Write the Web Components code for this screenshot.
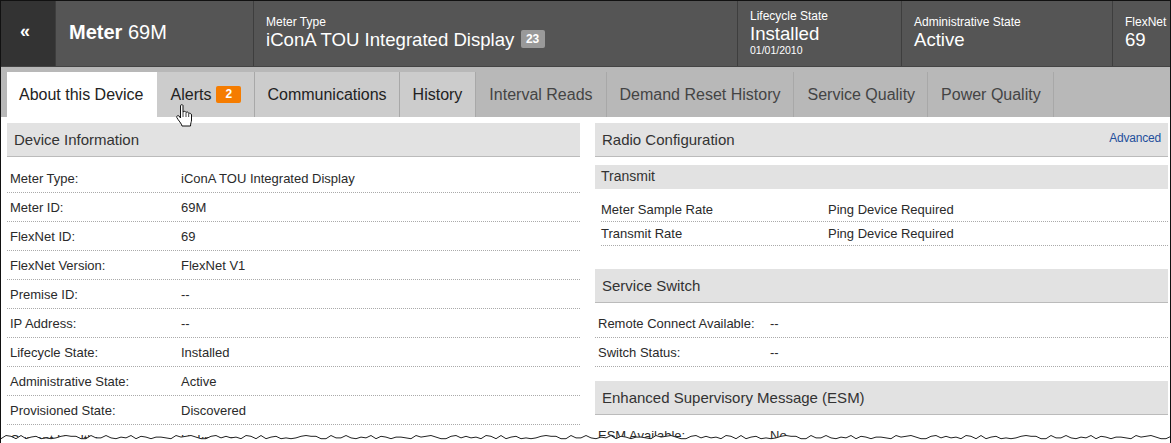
<!DOCTYPE html>
<html>
<head>
<meta charset="utf-8">
<style>
  html, body { margin: 0; padding: 0; background: #fff; overflow: hidden; }
  body { width: 1171px; height: 443px; font-family: "Liberation Sans", Arial, sans-serif; }
</style>
</head>
<body>
<device-page></device-page>
<script>
class HeaderCell extends HTMLElement {
  constructor() {
    super();
    this.attachShadow({ mode: "open" });
    this.shadowRoot.innerHTML = `<style>
        :host { display: flex; flex-direction: column; justify-content: center; box-sizing: border-box; height: 100%; padding: 0 0 1px 12px; border-left: 1px solid #3e3e3e; color: #fff; white-space: nowrap; overflow: hidden; }
        :host([date]) { padding-bottom: 3px; }
        .label { font-size: 12px; line-height: 14px; }
        .value { font-size: 18.6px; line-height: 22px; }
        .date { font-size: 10.5px; line-height: 11px; }
      </style>
      <div class="label">${this.getAttribute("label")}</div>
      <div class="value"><slot></slot></div>
      ${this.hasAttribute("date") ? `<div class="date">${this.getAttribute("date")}</div>` : ""}`;
  }
}

class TabItem extends HTMLElement {
  constructor() {
    super();
    this.attachShadow({ mode: "open" });
    this.shadowRoot.innerHTML = `<style>
        :host { display: flex; align-items: center; box-sizing: border-box; height: 45px; padding: 0 13px; font-size: 16px; background: #b8b8b8; color: #444; border-right: 1px solid #a8a8a8; white-space: nowrap; }
        :host([state="active"]) { background: #fff; color: #222; border-right: 1px solid #fff; padding: 0 12px; }
        :host([state="on"]) { background: #ccc; color: #222; }
      </style><slot></slot>`;
  }
}

class PanelHead extends HTMLElement {
  constructor() {
    super();
    this.attachShadow({ mode: "open" });
    this.shadowRoot.innerHTML = `<style>
        :host { display: flex; justify-content: space-between; box-sizing: border-box; height: 34px; padding: 0 7px; background: #e2e2e2; border-bottom: 1px solid #bbb; font-size: 15px; line-height: 34px; color: #333; }
        ::slotted(a) { font-size: 12px; line-height: 30px; letter-spacing: -0.2px; color: #1f4f9c; }
      </style><slot></slot><slot name="side"></slot>`;
  }
}

class InfoRow extends HTMLElement {
  constructor() {
    super();
    this.attachShadow({ mode: "open" });
    this.shadowRoot.innerHTML = `<style>
        :host { display: grid; grid-template-columns: var(--label-width, 171px) 1fr; box-sizing: border-box; height: var(--row-height, 29px); padding-left: var(--row-pad, 3px); border-bottom: 1px dotted #aaa; font-size: 13px; line-height: var(--row-line, 30px); color: #2a2a2a; white-space: nowrap; }
      </style><div>${this.getAttribute("label")}</div><div><slot></slot></div>`;
  }
}

class DevicePage extends HTMLElement {
  constructor() {
    super();
    this.attachShadow({ mode: "open" });
    this.shadowRoot.innerHTML = `<style>
        :host { display: block; position: relative; box-sizing: border-box; width: 1171px; height: 443px; overflow: hidden; background: #fff; border-top: 1px solid #111; border-left: 1px solid #111; border-right: 1px solid #111; font-family: "Liberation Sans", Arial, sans-serif; }
        .top { display: flex; box-sizing: border-box; height: 66px; background: #555; border-bottom: 1px solid #444; }
        .back { width: 54px; flex: none; display: flex; align-items: center; justify-content: center; background: #333; color: #fff; font-size: 18px; font-weight: bold; padding: 0 6px 4px 0; box-sizing: border-box; }
        .name { width: 198px; flex: none; padding-left: 13px; font-size: 20px; line-height: 63px; color: #fff; border-left: 1px solid #3e3e3e; box-sizing: border-box; }
        .count { display: inline-block; width: 24px; margin-left: 1px; text-align: center; background: #999; border-radius: 2px; color: #fff; font-size: 12px; font-weight: bold; line-height: 18px; vertical-align: 3px; }
        .tabs { display: flex; box-sizing: border-box; height: 50px; padding: 5px 0 0 6px; background: #b8b8b8; }
        .alert { display: inline-block; margin-left: 5px; width: 25px; text-align: center; background: #f57c00; border-radius: 2px; color: #fff; font-size: 12px; font-weight: bold; line-height: 17px; }
        .cols { display: grid; grid-template-columns: 573px 573px; gap: 15px; padding: 6px 0 0 6px; }
        .sub { height: 24px; margin-top: 8px; padding-left: 6px; background: #e2e2e2; font-size: 14px; line-height: 23px; color: #333; }
        .rates { --label-width: 227px; --row-height: 24px; --row-line: 23px; --row-pad: 0px; margin: 9px 0 0 6px; display: block; }
        .sw { --label-width: 172px; }
        .hand { position: absolute; left: 175px; top: 103px; }
        .tear { position: absolute; left: 0; top: 431px; }
      </style>
      <div class="top">
        <div class="back">«</div>
        <div class="name"><b>Meter</b> 69M</div>
        <header-cell style="width:484px" label="Meter Type">iConA TOU Integrated Display <span class="count">23</span></header-cell>
        <header-cell style="width:164px" label="Lifecycle State" date="01/01/2010">Installed</header-cell>
        <header-cell style="width:211px" label="Administrative State">Active</header-cell>
        <header-cell style="flex:1" label="FlexNet">69</header-cell>
      </div>
      <div class="tabs">
        <tab-item state="active">About this Device</tab-item>
        <tab-item state="on" style="padding-left:14px">Alerts<span class="alert">2</span></tab-item>
        <tab-item state="on" style="padding:0 12px">Communications</tab-item>
        <tab-item state="on">History</tab-item>
        <tab-item>Interval Reads</tab-item>
        <tab-item>Demand Reset History</tab-item>
        <tab-item style="padding-right:12px">Service Quality</tab-item>
        <tab-item style="padding-right:12px">Power Quality</tab-item>
      </div>
      <div class="cols">
        <section>
          <panel-head>Device Information</panel-head>
          <div style="height:7px"></div>
          <info-row label="Meter Type:">iConA TOU Integrated Display</info-row>
          <info-row label="Meter ID:">69M</info-row>
          <info-row label="FlexNet ID:">69</info-row>
          <info-row label="FlexNet Version:">FlexNet V1</info-row>
          <info-row label="Premise ID:">--</info-row>
          <info-row label="IP Address:">--</info-row>
          <info-row label="Lifecycle State:">Installed</info-row>
          <info-row label="Administrative State:">Active</info-row>
          <info-row label="Provisioned State:">Discovered</info-row>
          <info-row label="Current Health:">Unknown</info-row>
        </section>
        <section>
          <panel-head>Radio Configuration<a slot="side">Advanced</a></panel-head>
          <div class="sub">Transmit</div>
          <div class="rates">
            <info-row label="Meter Sample Rate">Ping Device Required</info-row>
            <info-row label="Transmit Rate">Ping Device Required</info-row>
          </div>
          <panel-head style="margin-top:23px">Service Switch</panel-head>
          <div class="sw" style="padding-top:6px">
            <info-row label="Remote Connect Available:">--</info-row>
            <info-row label="Switch Status:">--</info-row>
          </div>
          <panel-head style="margin-top:14px">Enhanced Supervisory Message (ESM)</panel-head>
          <div class="sw" style="padding-top:6px">
            <info-row label="ESM Available:">No</info-row>
          </div>
        </section>
      </div>
      <svg class="hand" width="17" height="23" viewBox="0 0 17 23">
        <path d="M4.5 1.500C4.500 .5 7 .5 7 1.500V8C8 7 9.500 7 10 8.500C11 7.500 12.500 8 12.700 9.500C13.700 8.800 15.500 9.500 15.500 11V16C15.500 18 14.500 19 14.500 22H6C6 20 2 16 .8 13.500C.2 12 2 11 3 12L4.500 14Z" fill="#fff" stroke="#111" stroke-width="1"/>
        <path d="M7 8V13M10 9V13M12.700 10V13" stroke="#111" stroke-width=".8" fill="none"/>
      </svg>
      <svg class="tear" width="1171" height="15" viewBox="0 0 1171 15">
        <path id="tear" fill="#fff" stroke="#222" stroke-width="1"/>
      </svg>`;
    let d = "M-2 4";
    let seed = 7;
    for (let x = 0; x <= 1175; x += 5) {
      seed = (seed * 31 + 11) % 97;
      d += ` L${x} ${3.5 + (seed % 5) * 0.8}`;
    }
    d += " L1175 20 L-2 20 Z";
    this.shadowRoot.getElementById("tear").setAttribute("d", d);
  }
}

customElements.define("header-cell", HeaderCell);
customElements.define("tab-item", TabItem);
customElements.define("panel-head", PanelHead);
customElements.define("info-row", InfoRow);
customElements.define("device-page", DevicePage);
</script>
</body>
</html>
